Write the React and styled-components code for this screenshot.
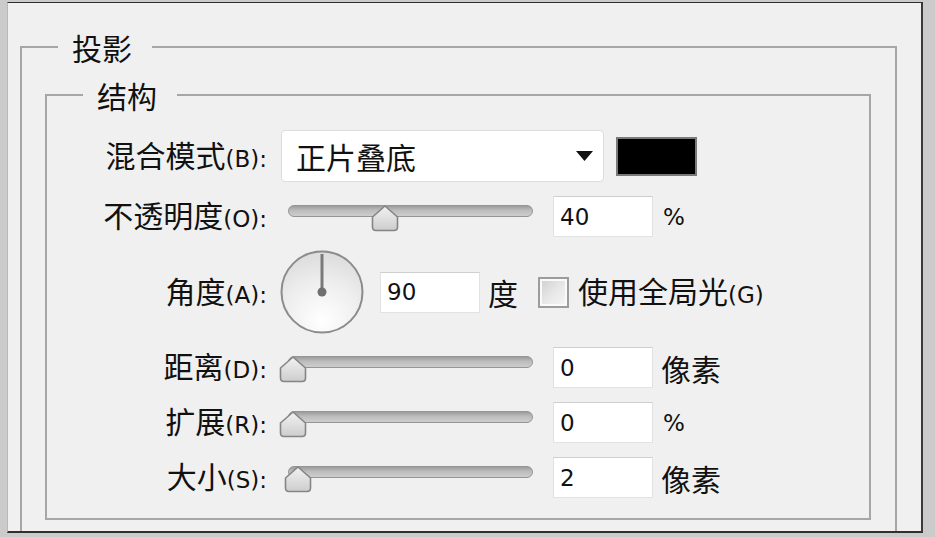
import styled, { createGlobalStyle } from "styled-components";

const GlobalStyle = createGlobalStyle`
  html, body {
    margin: 0;
    padding: 0;
    background: #cbcbcb;
  }
  body {
    width: 935px;
    height: 537px;
    overflow: hidden;
    font-family: "Noto Sans CJK SC", "DejaVu Sans", sans-serif;
    color: #111;
  }
`;

const rows = [
  { key: "distance", label: "距离", hot: "D", value: 0, unit: "像素" },
  { key: "spread", label: "扩展", hot: "R", value: 0, unit: "%" },
  { key: "size", label: "大小", hot: "S", value: 2, unit: "像素" },
];

export default function App() {
  return (
    <>
      <GlobalStyle />
      <Window>
        <OuterSet>
          <Legend $left={36}>投影</Legend>
          <InnerSet>
            <Legend $left={36}>结构</Legend>
            <Rows>
              <Row>
                <Label text="混合模式" hot="B" />
                <Select>
                  <SelectText>正片叠底</SelectText>
                  <svg width="17" height="10" viewBox="0 0 17 10">
                    <path d="M0 0 H17 L8.5 10 Z" fill="#111" />
                  </svg>
                </Select>
                <Swatch color="#000" />
              </Row>

              <Row>
                <Label text="不透明度" hot="O" />
                <Slider value={0.4} />
                <Field>40</Field>
                <Unit $latin>%</Unit>
              </Row>

              <Row>
                <Label text="角度" hot="A" />
                <Dial />
                <Field $gap={16}>90</Field>
                <Unit>度</Unit>
                <Check />
                <CheckText>
                  使用全局光<Latin>(G)</Latin>
                </CheckText>
              </Row>

              {rows.map((r) => (
                <Row key={r.key}>
                  <Label text={r.label} hot={r.hot} />
                  <Slider value={r.value / 100} />
                  <Field>{r.value}</Field>
                  <Unit $latin={r.unit === "%"}>{r.unit}</Unit>
                </Row>
              ))}
            </Rows>
          </InnerSet>
        </OuterSet>
      </Window>
    </>
  );
}

function Label({ text, hot }) {
  return (
    <LabelText>
      {text}
      <Latin>({hot}):</Latin>
    </LabelText>
  );
}

function Slider({ value }) {
  return (
    <SliderBox>
      <Track />
      <Thumb style={{ left: `${5 + value * 230 - 14}px` }} width="28" height="27" viewBox="0 0 28 27">
        <defs>
          <linearGradient id="thumbfill" x1="0" y1="0" x2="0" y2="1">
            <stop offset="0" stopColor="#f2f2f2" />
            <stop offset="1" stopColor="#cdcdcd" />
          </linearGradient>
        </defs>
        <path
          d="M14 1 L26.5 12 V22 Q26.5 25.5 23 25.5 H5 Q1.5 25.5 1.5 22 V12 Z"
          fill="url(#thumbfill)"
          stroke="#858585"
          strokeWidth="1.6"
          strokeLinejoin="round"
        />
      </Thumb>
    </SliderBox>
  );
}

function Dial() {
  return (
    <DialBox width="84" height="84" viewBox="0 0 84 84">
      <defs>
        <radialGradient id="dialfill" cx="0.5" cy="0.85" r="0.8">
          <stop offset="0" stopColor="#ffffff" />
          <stop offset="0.6" stopColor="#eeeeee" />
          <stop offset="1" stopColor="#dedede" />
        </radialGradient>
      </defs>
      <circle cx="42" cy="42" r="40.5" fill="url(#dialfill)" stroke="#8c8c8c" strokeWidth="2" />
      <line x1="42" y1="42" x2="42" y2="4" stroke="#7a7a7a" strokeWidth="3" />
      <circle cx="42" cy="42" r="4.5" fill="#6f6f6f" />
    </DialBox>
  );
}

const Window = styled.div`
  box-sizing: border-box;
  margin: 2px 0 0 7px;
  width: 916px;
  height: 531px;
  overflow: hidden;
  background: #f0f0f0;
  border-top: 1px solid #2d2d2d;
  border-left: 1px solid #b9b9b9;
  border-right: 2px solid #3a3a3a;
  border-bottom: 2px solid #303030;
  padding: 27px 24px 0 12px;
`;

const OuterSet = styled.fieldset`
  margin: 0;
  padding: 14px 0 0 0;
  min-width: 0;
  height: 560px;
  border: 2px solid #a6a6a6;
`;

const InnerSet = styled.fieldset`
  margin: 0 24px 0 23px;
  padding: 18px 0 20px 0;
  min-width: 0;
  border: 2px solid #a6a6a6;
`;

const Legend = styled.legend`
  margin-left: ${(p) => p.$left}px;
  padding: 0 20px 0 14px;
  font-size: 30px;
  line-height: 34px;
  color: #111;
`;

const Rows = styled.div`
  display: flex;
  flex-direction: column;
  gap: 14px;
`;

const Row = styled.div`
  display: flex;
  align-items: center;
`;

const LabelText = styled.div`
  flex: 0 0 220px;
  margin-right: 14px;
  text-align: right;
  font-size: 30px;
  line-height: 36px;
  white-space: nowrap;
`;

const Latin = styled.span`
  font-family: "DejaVu Sans", sans-serif;
  font-size: 23px;
`;

const Select = styled.div`
  box-sizing: border-box;
  width: 323px;
  height: 52px;
  display: flex;
  align-items: center;
  justify-content: space-between;
  padding: 0 10px 0 14px;
  background: #fff;
  border: 1px solid #dcdcdc;
  border-radius: 4px;
`;

const SelectText = styled.span`
  font-size: 30px;
  line-height: 36px;
`;

const Swatch = styled.div`
  box-sizing: border-box;
  margin-left: 12px;
  width: 81px;
  height: 39px;
  background: ${(p) => p.color};
  border: 2px solid #7a7a7a;
`;

const SliderBox = styled.div`
  position: relative;
  margin-left: 7px;
  width: 245px;
  height: 41px;
`;

const Track = styled.div`
  box-sizing: border-box;
  margin-top: 9px;
  width: 245px;
  height: 12px;
  border-radius: 6px;
  border: 1px solid #959595;
  background: linear-gradient(#9c9c9c, #bdbdbd 45%, #cdcdcd);
`;

const Thumb = styled.svg`
  position: absolute;
  top: 9px;
`;

const Field = styled.div`
  box-sizing: border-box;
  margin-left: ${(p) => p.$gap ?? 20}px;
  width: 100px;
  height: 41px;
  padding-left: 6px;
  display: flex;
  align-items: center;
  background: #fff;
  border: 1px solid #e2e2e2;
  border-top-color: #cfcfcf;
  font-family: "DejaVu Sans", sans-serif;
  font-size: 23px;
  color: #111;
`;

const Unit = styled.span`
  margin-left: ${(p) => (p.$latin ? 10 : 8)}px;
  font-family: ${(p) => (p.$latin ? `"DejaVu Sans", sans-serif` : `"Noto Sans CJK SC", sans-serif`)};
  font-size: ${(p) => (p.$latin ? 23 : 30)}px;
  line-height: 36px;
`;

const DialBox = styled.svg`
  display: block;
  margin-left: -1px;
  margin-top: -1px;
  margin-bottom: -1px;
`;

const Check = styled.div`
  box-sizing: border-box;
  margin-left: 20px;
  width: 31px;
  height: 31px;
  border: 2px solid #9c9c9c;
  box-shadow: inset 0 0 0 2px #fafafa;
  background: linear-gradient(135deg, #cfcfcf, #e9e9e9 55%, #f6f6f6);
`;

const CheckText = styled.span`
  margin-left: 9px;
  font-size: 30px;
  line-height: 36px;
  white-space: nowrap;
`;
